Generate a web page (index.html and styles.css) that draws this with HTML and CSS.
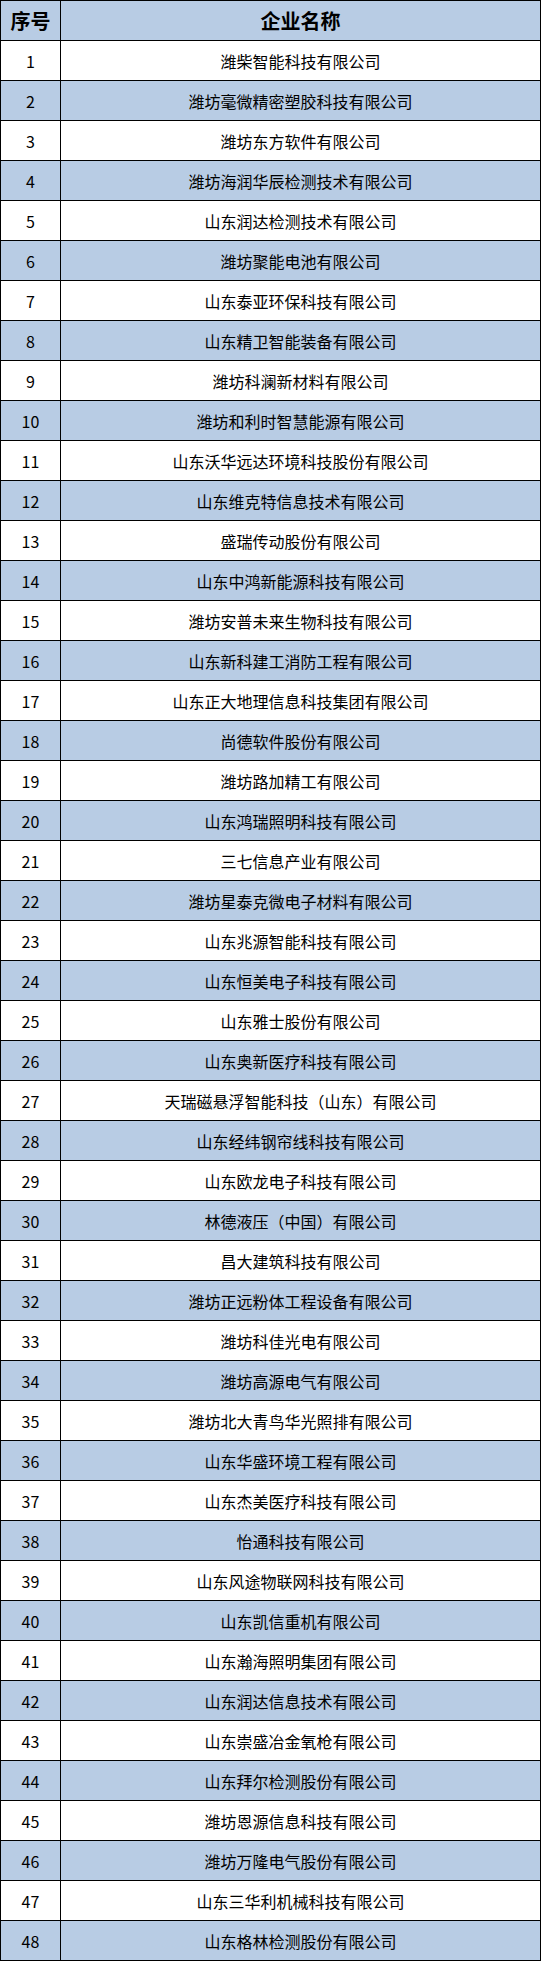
FILE: index.html
```html
<!DOCTYPE html>
<html lang="zh-CN">
<head>
<meta charset="utf-8">
<title>企业名单</title>
<link rel="stylesheet" href="styles.css">
</head>
<body>
<div class="table">
  <div class="row head"><div class="c num">序号</div><div class="c name">企业名称</div></div>
  <div class="row"><div class="c num">1</div><div class="c name">潍柴智能科技有限公司</div></div>
  <div class="row alt"><div class="c num">2</div><div class="c name">潍坊毫微精密塑胶科技有限公司</div></div>
  <div class="row"><div class="c num">3</div><div class="c name">潍坊东方软件有限公司</div></div>
  <div class="row alt"><div class="c num">4</div><div class="c name">潍坊海润华辰检测技术有限公司</div></div>
  <div class="row"><div class="c num">5</div><div class="c name">山东润达检测技术有限公司</div></div>
  <div class="row alt"><div class="c num">6</div><div class="c name">潍坊聚能电池有限公司</div></div>
  <div class="row"><div class="c num">7</div><div class="c name">山东泰亚环保科技有限公司</div></div>
  <div class="row alt"><div class="c num">8</div><div class="c name">山东精卫智能装备有限公司</div></div>
  <div class="row"><div class="c num">9</div><div class="c name">潍坊科澜新材料有限公司</div></div>
  <div class="row alt"><div class="c num">10</div><div class="c name">潍坊和利时智慧能源有限公司</div></div>
  <div class="row"><div class="c num">11</div><div class="c name">山东沃华远达环境科技股份有限公司</div></div>
  <div class="row alt"><div class="c num">12</div><div class="c name">山东维克特信息技术有限公司</div></div>
  <div class="row"><div class="c num">13</div><div class="c name">盛瑞传动股份有限公司</div></div>
  <div class="row alt"><div class="c num">14</div><div class="c name">山东中鸿新能源科技有限公司</div></div>
  <div class="row"><div class="c num">15</div><div class="c name">潍坊安普未来生物科技有限公司</div></div>
  <div class="row alt"><div class="c num">16</div><div class="c name">山东新科建工消防工程有限公司</div></div>
  <div class="row"><div class="c num">17</div><div class="c name">山东正大地理信息科技集团有限公司</div></div>
  <div class="row alt"><div class="c num">18</div><div class="c name">尚德软件股份有限公司</div></div>
  <div class="row"><div class="c num">19</div><div class="c name">潍坊路加精工有限公司</div></div>
  <div class="row alt"><div class="c num">20</div><div class="c name">山东鸿瑞照明科技有限公司</div></div>
  <div class="row"><div class="c num">21</div><div class="c name">三七信息产业有限公司</div></div>
  <div class="row alt"><div class="c num">22</div><div class="c name">潍坊星泰克微电子材料有限公司</div></div>
  <div class="row"><div class="c num">23</div><div class="c name">山东兆源智能科技有限公司</div></div>
  <div class="row alt"><div class="c num">24</div><div class="c name">山东恒美电子科技有限公司</div></div>
  <div class="row"><div class="c num">25</div><div class="c name">山东雅士股份有限公司</div></div>
  <div class="row alt"><div class="c num">26</div><div class="c name">山东奥新医疗科技有限公司</div></div>
  <div class="row"><div class="c num">27</div><div class="c name">天瑞磁悬浮智能科技（山东）有限公司</div></div>
  <div class="row alt"><div class="c num">28</div><div class="c name">山东经纬钢帘线科技有限公司</div></div>
  <div class="row"><div class="c num">29</div><div class="c name">山东欧龙电子科技有限公司</div></div>
  <div class="row alt"><div class="c num">30</div><div class="c name">林德液压（中国）有限公司</div></div>
  <div class="row"><div class="c num">31</div><div class="c name">昌大建筑科技有限公司</div></div>
  <div class="row alt"><div class="c num">32</div><div class="c name">潍坊正远粉体工程设备有限公司</div></div>
  <div class="row"><div class="c num">33</div><div class="c name">潍坊科佳光电有限公司</div></div>
  <div class="row alt"><div class="c num">34</div><div class="c name">潍坊高源电气有限公司</div></div>
  <div class="row"><div class="c num">35</div><div class="c name">潍坊北大青鸟华光照排有限公司</div></div>
  <div class="row alt"><div class="c num">36</div><div class="c name">山东华盛环境工程有限公司</div></div>
  <div class="row"><div class="c num">37</div><div class="c name">山东杰美医疗科技有限公司</div></div>
  <div class="row alt"><div class="c num">38</div><div class="c name">怡通科技有限公司</div></div>
  <div class="row"><div class="c num">39</div><div class="c name">山东风途物联网科技有限公司</div></div>
  <div class="row alt"><div class="c num">40</div><div class="c name">山东凯信重机有限公司</div></div>
  <div class="row"><div class="c num">41</div><div class="c name">山东瀚海照明集团有限公司</div></div>
  <div class="row alt"><div class="c num">42</div><div class="c name">山东润达信息技术有限公司</div></div>
  <div class="row"><div class="c num">43</div><div class="c name">山东崇盛冶金氧枪有限公司</div></div>
  <div class="row alt"><div class="c num">44</div><div class="c name">山东拜尔检测股份有限公司</div></div>
  <div class="row"><div class="c num">45</div><div class="c name">潍坊恩源信息科技有限公司</div></div>
  <div class="row alt"><div class="c num">46</div><div class="c name">潍坊万隆电气股份有限公司</div></div>
  <div class="row"><div class="c num">47</div><div class="c name">山东三华利机械科技有限公司</div></div>
  <div class="row alt"><div class="c num">48</div><div class="c name">山东格林检测股份有限公司</div></div>
</div>
</body>
</html>
```

FILE: styles.css
```css
html, body {
  margin: 0;
  padding: 0;
  background: #ffffff;
}

.table {
  width: 541px;
  box-sizing: border-box;
  border-right: 1px solid #000;
  border-bottom: 1px solid #000;
  font-family: "Noto Sans CJK SC", "Noto Sans", sans-serif;
  color: #000;
}

.row {
  display: flex;
  height: 40px;
  background: #ffffff;
}

.row.alt,
.row.head {
  background: #b8cce4;
}

.c {
  box-sizing: border-box;
  border-top: 1px solid #000;
  border-left: 1px solid #000;
  display: flex;
  align-items: center;
  justify-content: center;
  font-size: 16px;
  line-height: 1;
  white-space: nowrap;
}

.num {
  width: 60px;
  flex: none;
}

.name {
  flex: 1;
}

.head .c {
  font-size: 20px;
  font-weight: 700;
}
```
